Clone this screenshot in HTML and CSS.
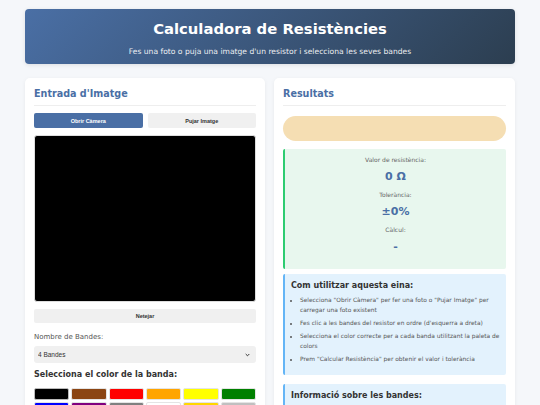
FILE: index.html
```html
<!DOCTYPE html>
<html lang="ca">
<head>
    <meta charset="UTF-8">
    <meta name="viewport" content="width=device-width, initial-scale=1.0">
    <title>Calculadora de Resistències</title>
    <link rel="stylesheet" href="styles.css">
</head>
<body>
    <div class="container">
        <div class="header">
            <div class="title">Calculadora de Resistències</div>
            <div class="subtitle">Fes una foto o puja una imatge d'un resistor i selecciona les seves bandes</div>
        </div>
        <div class="main">
            <div class="card">
                <div class="card-title">Entrada d'Imatge</div>
                <div class="btn-row">
                    <button class="btn btn-primary">Obrir Càmera</button>
                    <button class="btn">Pujar Imatge</button>
                </div>
                <div class="camera"></div>
                <button class="btn btn-full">Netejar</button>
                <div class="label">Nombre de Bandes:</div>
                <div class="select-wrap">
                    <select class="select">
                        <option>4 Bandes</option>
                        <option>5 Bandes</option>
                        <option>6 Bandes</option>
                    </select>
                    <svg class="select-arrow" width="5" height="4" viewBox="0 0 5 4"><path d="M0.7 1 L2.5 2.8 L4.3 1" fill="none" stroke="#333" stroke-width="1"/></svg>
                </div>
                <div class="sub-title">Selecciona el color de la banda:</div>
                <div class="palette">
                    <div class="swatch selected" style="background: #000"></div>
                    <div class="swatch" style="background: #8b4513"></div>
                    <div class="swatch" style="background: #ff0000"></div>
                    <div class="swatch" style="background: #ffa500"></div>
                    <div class="swatch" style="background: #ffff00"></div>
                    <div class="swatch" style="background: #008000"></div>
                    <div class="swatch" style="background: #0000ff"></div>
                    <div class="swatch" style="background: #800080"></div>
                    <div class="swatch" style="background: #808080"></div>
                    <div class="swatch" style="background: #ffffff"></div>
                    <div class="swatch" style="background: #ffd700"></div>
                    <div class="swatch" style="background: #c0c0c0"></div>
                </div>
            </div>
            <div class="card">
                <div class="card-title">Resultats</div>
                <div class="resistor"></div>
                <div class="result">
                    <div class="result-label">Valor de resistència:</div>
                    <div class="result-value">0 Ω</div>
                    <div class="result-label">Tolerància:</div>
                    <div class="result-value">±0%</div>
                    <div class="result-label">Càlcul:</div>
                    <div class="result-value">-</div>
                </div>
                <div class="info">
                    <div class="info-title">Com utilitzar aquesta eina:</div>
                    <ul>
                        <li>Selecciona "Obrir Càmera" per fer una foto o "Pujar Imatge" per carregar una foto existent</li>
                        <li>Fes clic a les bandes del resistor en ordre (d'esquerra a dreta)</li>
                        <li>Selecciona el color correcte per a cada banda utilitzant la paleta de colors</li>
                        <li>Prem "Calcular Resistència" per obtenir el valor i tolerància</li>
                    </ul>
                </div>
                <div class="info">
                    <div class="info-title">Informació sobre les bandes:</div>
                    <ul>
                        <li>Les dues primeres bandes indiquen els dígits significatius</li>
                        <li>La tercera banda és el multiplicador</li>
                        <li>La quarta banda indica la tolerància</li>
                    </ul>
                </div>
            </div>
        </div>
    </div>
</body>
</html>
```

FILE: styles.css
```css
body {
    margin: 0;
    padding: 0;
    background: #f5f7fa;
    font-family: 'Segoe UI', Tahoma, 'DejaVu Sans', Verdana, sans-serif;
    color: #333;
}
.container {
    width: 490px;
    margin: 0 auto;
    padding-top: 9px;
}
.header {
    background: linear-gradient(135deg, #4a6fa5, #2c3e50);
    color: white;
    border-radius: 4px;
    height: 55px;
    box-sizing: border-box;
    padding-top: 9px;
    text-align: center;
    box-shadow: 0 1px 4px rgba(0, 0, 0, 0.1);
}
.title {
    font-size: 14.8px;
    font-weight: bold;
    line-height: 22px;
}
.subtitle {
    font-size: 7.6px;
    margin-top: 7px;
    opacity: 0.9;
}
.main {
    display: grid;
    grid-template-columns: 240px 241px;
    gap: 9px;
    margin-top: 14px;
}
.card {
    background: white;
    border-radius: 5px;
    padding: 9px;
    box-shadow: 0 1px 4px rgba(0, 0, 0, 0.06);
    height: 400px;
}
.card-title {
    font-size: 9.6px;
    font-weight: bold;
    color: #4a6fa5;
    line-height: 14px;
    padding: 0 0 4px;
    border-bottom: 1px solid #eee;
}
.btn {
    font-family: 'Liberation Sans', Arial, sans-serif;
    font-size: 5.5px;
    font-weight: bold;
    border: none;
    border-radius: 2px;
    background: #f0f0f0;
    color: #333;
    height: 15px;
    padding: 0;
}
.btn-row {
    display: grid;
    grid-template-columns: 1fr 1fr;
    gap: 5px;
    margin-top: 7px;
}
.btn-primary {
    background: #4a6fa5;
    color: white;
}
.camera {
    background: #000;
    border-radius: 3px;
    height: 167px;
    margin-top: 7px;
    border: 1px solid #ddd;
    box-sizing: border-box;
}
.btn-full {
    width: 100%;
    display: block;
    margin-top: 7px;
    height: 14px;
}
.label {
    font-size: 7px;
    color: #555;
    margin-top: 10px;
}
.select-wrap {
    position: relative;
    margin-top: 5px;
}
.select {
    display: block;
    width: 100%;
    height: 17px;
    border: none;
    border-radius: 3px;
    background: #f0f0f0;
    font-family: 'Liberation Sans', Arial, sans-serif;
    font-size: 6.5px;
    color: #333;
    padding: 0 4px;
    appearance: none;
    -webkit-appearance: none;
}
.select-arrow {
    position: absolute;
    right: 6px;
    top: 7px;
}
.sub-title {
    font-size: 8px;
    font-weight: bold;
    margin-top: 7px;
}
.palette {
    display: grid;
    grid-template-columns: repeat(6, 1fr);
    gap: 2px;
    margin-top: 9px;
}
.swatch {
    height: 12px;
    border-radius: 2px;
    border: 1px solid #e4e4e4;
    box-sizing: border-box;
}
.swatch.selected {
    border-color: #bbb;
}
.resistor {
    height: 25px;
    background: #f5deb3;
    border-radius: 13px;
    margin-top: 10px;
}
.result {
    background: #e8f7ee;
    border-left: 2px solid #2ecc71;
    border-radius: 2px;
    margin-top: 8px;
    height: 120px;
    box-sizing: border-box;
    padding-top: 6px;
    text-align: center;
}
.result-label {
    font-size: 6px;
    color: #666;
    line-height: 10px;
}
.result-value {
    font-size: 11px;
    font-weight: bold;
    color: #4a6fa5;
    line-height: 14px;
    margin: 5px 0 6px;
}
.info {
    background: #e3f2fd;
    border-left: 2px solid #64b5f6;
    border-radius: 2px;
    margin-top: 5px;
    padding: 6px 6px 8px;
    margin-bottom: 9px;
}
.info-title {
    font-size: 8px;
    font-weight: bold;
    line-height: 11px;
}
.info ul {
    margin: 4px 0 0;
    padding-left: 9px;
    font-size: 5.9px;
    color: #555;
    line-height: 10px;
}
.info li {
    margin-bottom: 3px;
}
```
